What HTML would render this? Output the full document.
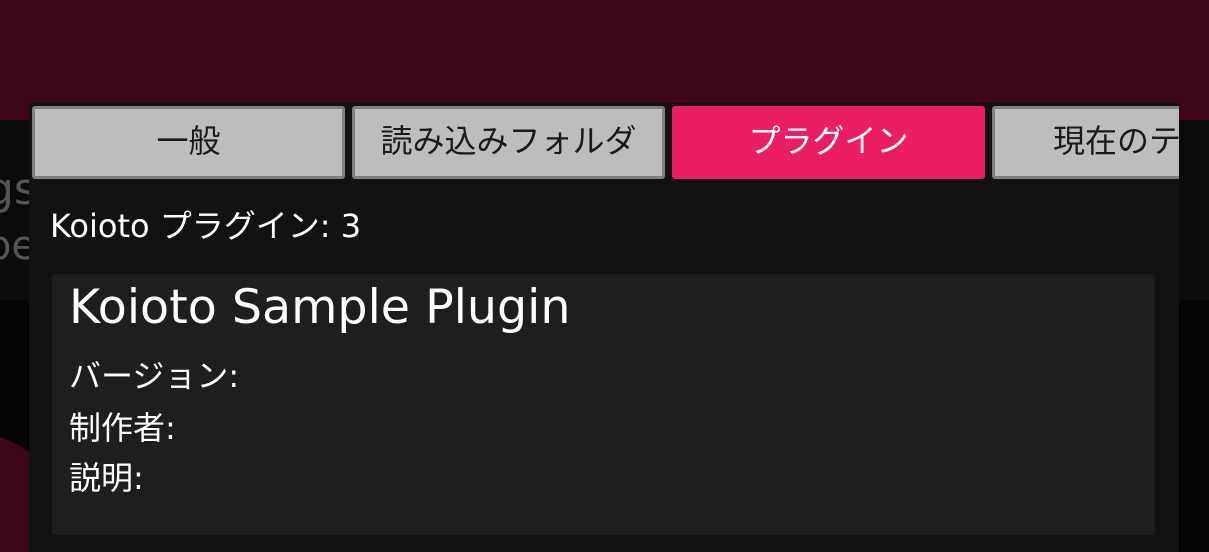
<!DOCTYPE html>
<html><head><meta charset="utf-8"><style>
*{margin:0;padding:0;box-sizing:border-box}
html,body{width:1209px;height:552px;overflow:hidden}
body{background:#050505;position:relative;font-family:"DejaVu Sans","Noto Sans CJK JP",sans-serif}
.wrap{position:absolute;left:0;top:0;width:1209px;height:552px;overflow:hidden}
.top{position:absolute;left:0;top:0;width:1209px;height:120px;background:#3b0719}
.mid{position:absolute;left:0;top:120px;width:1209px;height:180px;background:#0b0b0b}
.circ{position:absolute;left:-160px;top:430px;width:240px;height:240px;border-radius:50%;background:#3b0719}
.bg{position:absolute;left:-14px;color:#555;font-size:44px;line-height:1}
.panel{position:absolute;left:29px;top:103px;width:1150px;height:449px;background:#121212;overflow:hidden}
.tab{position:absolute;top:3px;height:73px;width:313px;background:#bdbdbd;border:3px solid #7f7f7f;border-radius:3px;color:#1a1a1a;font-size:32px;text-align:center;line-height:64px;white-space:nowrap;overflow:hidden}
.tab.on{background:#e91e63;border-color:#e91e63;color:#fff}
.count{position:absolute;left:21px;top:107px;color:#fff;font-size:32px;line-height:32px;white-space:nowrap}
.card{position:absolute;left:23px;top:171px;width:1103px;height:261px;background:#1e1e1e;border-radius:4px;color:#fff}
.t{position:absolute;left:17px;top:11px;font-size:47.5px;line-height:46px;white-space:nowrap}
.l{position:absolute;left:17px;font-size:32px;line-height:32px;white-space:nowrap}
</style></head><body>
<div class="wrap">
<div class="top"></div><div class="mid"></div><div class="circ"></div>
<div class="bg" style="top:168px">gs</div>
<div class="bg" style="top:226px;font-size:40px">be</div>
<div class="panel">
<div class="tab" style="left:3px">一般</div>
<div class="tab" style="left:323px">読み込みフォルダ</div>
<div class="tab on" style="left:643px">プラグイン</div>
<div class="tab" style="left:963px;width:200px;text-align:left;padding-left:58px">現在のテーマ</div>
<div class="count">Koioto プラグイン: 3</div>
<div class="card">
<div class="t">Koioto Sample Plugin</div>
<div class="l" style="top:86px">バージョン:</div>
<div class="l" style="top:138px">制作者:</div>
<div class="l" style="top:188px">説明:</div>
</div>
</div>
</div>
</body></html>
